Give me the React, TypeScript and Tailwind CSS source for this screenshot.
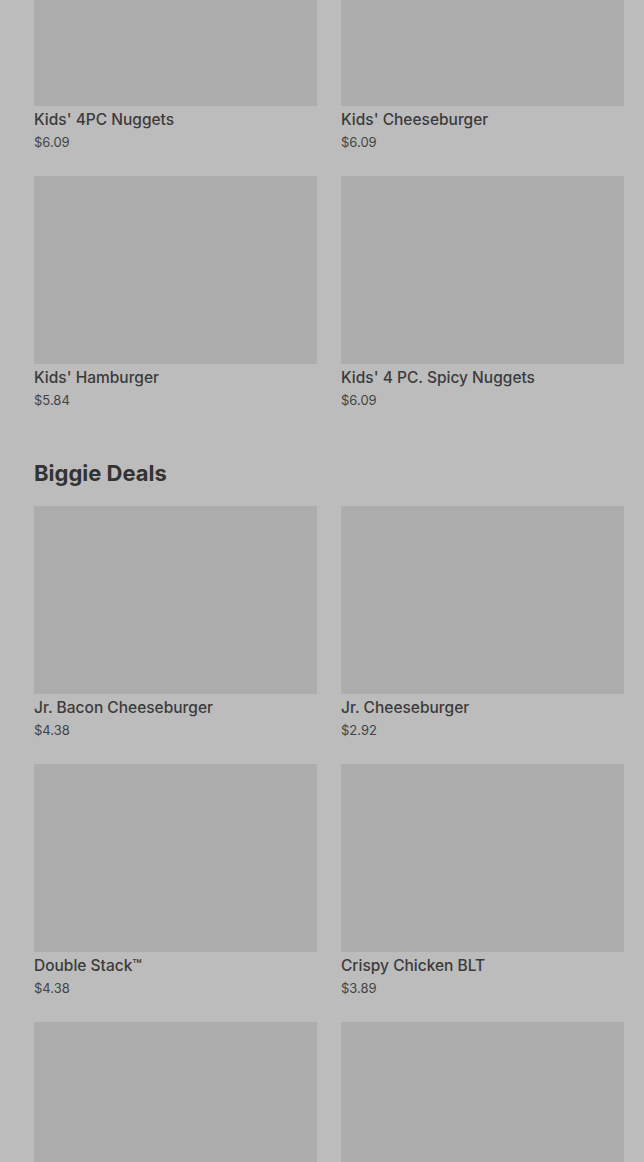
const kids = [
  { name: "Kids' 4PC Nuggets", price: '$6.09' },
  { name: "Kids' Cheeseburger", price: '$6.09' },
  { name: "Kids' Hamburger", price: '$5.84' },
  { name: "Kids' 4 PC. Spicy Nuggets", price: '$6.09' },
];

const biggie = [
  { name: 'Jr. Bacon Cheeseburger', price: '$4.38' },
  { name: 'Jr. Cheeseburger', price: '$2.92' },
  { name: 'Double Stack™', price: '$4.38' },
  { name: 'Crispy Chicken BLT', price: '$3.89' },
  { name: '', price: '' },
  { name: '', price: '' },
];

type Item = { name: string; price: string };

const MenuCard = ({ item }: { item: Item }) => (
  <div className="flex flex-col">
    <div className="h-[188px] w-full bg-[#adadad]" />
    <p className="mt-0.5 text-[15.5px] leading-6 font-medium text-[#3b3b3b]">{item.name}</p>
    <p className="text-[13px] leading-5 text-[#444444]">{item.price}</p>
  </div>
);

export default function App() {
  return (
    <div
      className="h-[1162px] overflow-hidden bg-[#bcbcbc] pl-[34px] pr-5"
      style={{ fontFamily: 'Inter, "Noto Sans", sans-serif' }}
    >
      <div className="-mt-[82px] flex flex-col">
        <section className="grid grid-cols-2 gap-x-6 gap-y-6">
          {kids.map((item) => (
            <MenuCard key={item.name} item={item} />
          ))}
        </section>

        <h2 className="mt-[47px] text-[22px] leading-8 font-bold text-[#333333]">
          Biggie Deals
        </h2>

        <section className="mt-[17px] grid grid-cols-2 gap-x-6 gap-y-6">
          {biggie.map((item, i) => (
            <MenuCard key={i} item={item} />
          ))}
        </section>
      </div>
    </div>
  );
}
